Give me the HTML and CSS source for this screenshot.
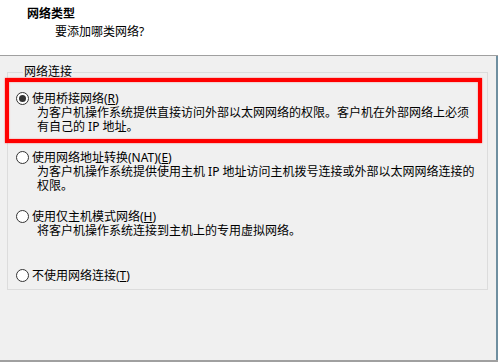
FILE: index.html
```html
<!DOCTYPE html>
<html lang="zh-CN">
<head>
<meta charset="utf-8">
<title>网络类型</title>
<link rel="stylesheet" href="styles.css">
</head>
<body>
<div class="dialog">
  <header class="head">
    <div class="head-title">网络类型</div>
    <div class="head-sub">要添加哪类网络?</div>
  </header>
  <main class="content">
    <fieldset class="group">
      <legend class="legend">网络连接</legend>
      <div class="option">
        <div class="opt-row"><span class="radio checked"></span><span class="opt-label">使用桥接网络(<u>R</u>)</span></div>
        <div class="opt-desc">为客户机操作系统提供直接访问外部以太网网络的权限。客户机在外部网络上必须<br>有自己的 IP 地址。</div>
      </div>
      <div class="option">
        <div class="opt-row"><span class="radio"></span><span class="opt-label">使用网络地址转换(NAT)(<u>E</u>)</span></div>
        <div class="opt-desc">为客户机操作系统提供使用主机 IP 地址访问主机拨号连接或外部以太网网络连接的<br>权限。</div>
      </div>
      <div class="option">
        <div class="opt-row"><span class="radio"></span><span class="opt-label">使用仅主机模式网络(<u>H</u>)</span></div>
        <div class="opt-desc">将客户机操作系统连接到主机上的专用虚拟网络。</div>
      </div>
      <div class="option last">
        <div class="opt-row"><span class="radio"></span><span class="opt-label">不使用网络连接(<u>T</u>)</span></div>
      </div>
    </fieldset>
    <div class="highlight"></div>
  </main>
</div>
</body>
</html>
```
FILE: styles.css
```css
html, body {
  margin: 0;
  padding: 0;
  background: #f0f0f0;
}
body {
  font-family: "Noto Sans", "Noto Sans CJK SC", sans-serif;
  font-size: 12px;
  color: #000;
  line-height: 14px;
}
.dialog {
  width: 498px;
  height: 362px;
  box-sizing: border-box;
  border-bottom: 2px solid #a0a0a0;
  display: flex;
  flex-direction: column;
  position: relative;
}
.head {
  height: 56px;
  background: #fff;
  border-bottom: 1px solid #a0a0a0;
  box-sizing: border-box;
  padding: 7px 0 0 27px;
}
.head-title {
  font-weight: bold;
  line-height: 14px;
}
.head-sub {
  margin: 4px 0 0 28px;
  line-height: 14px;
}
.content {
  flex: 1;
  border-right: 2px solid #6f8fa0;
  padding: 9px 0 0 7px;
  position: relative;
}
.group {
  margin: 0;
  width: 481px;
  height: 225px;
  box-sizing: border-box;
  border: 1px solid #dcdcdc;
  padding: 12px 0 0 8px;
}
.legend {
  padding: 0 1px;
  margin-left: 7px;
  line-height: 14px;
}
.option {
  height: 59px;
}
.opt-row {
  display: flex;
  align-items: center;
  height: 15px;
}
.radio {
  width: 13px;
  height: 13px;
  box-sizing: border-box;
  border: 1px solid #333;
  border-radius: 50%;
  background: #fff;
  display: flex;
  align-items: center;
  justify-content: center;
  flex: none;
}
.radio.checked::after {
  content: "";
  width: 7px;
  height: 7px;
  border-radius: 50%;
  background: #333;
}
.opt-label {
  margin-left: 3px;
  line-height: 15px;
}
.opt-desc {
  margin: 0 0 0 21px;
  line-height: 14px;
}
.opt-label u {
  text-decoration-thickness: 1px;
  text-underline-offset: 1px;
}
.highlight {
  position: absolute;
  left: 5px;
  top: 22px;
  width: 477px;
  height: 65px;
  box-sizing: border-box;
  border: 4px solid #f00;
  box-shadow: 0 0 1.5px #f55, inset 0 0 1.5px #f55;
}
```
